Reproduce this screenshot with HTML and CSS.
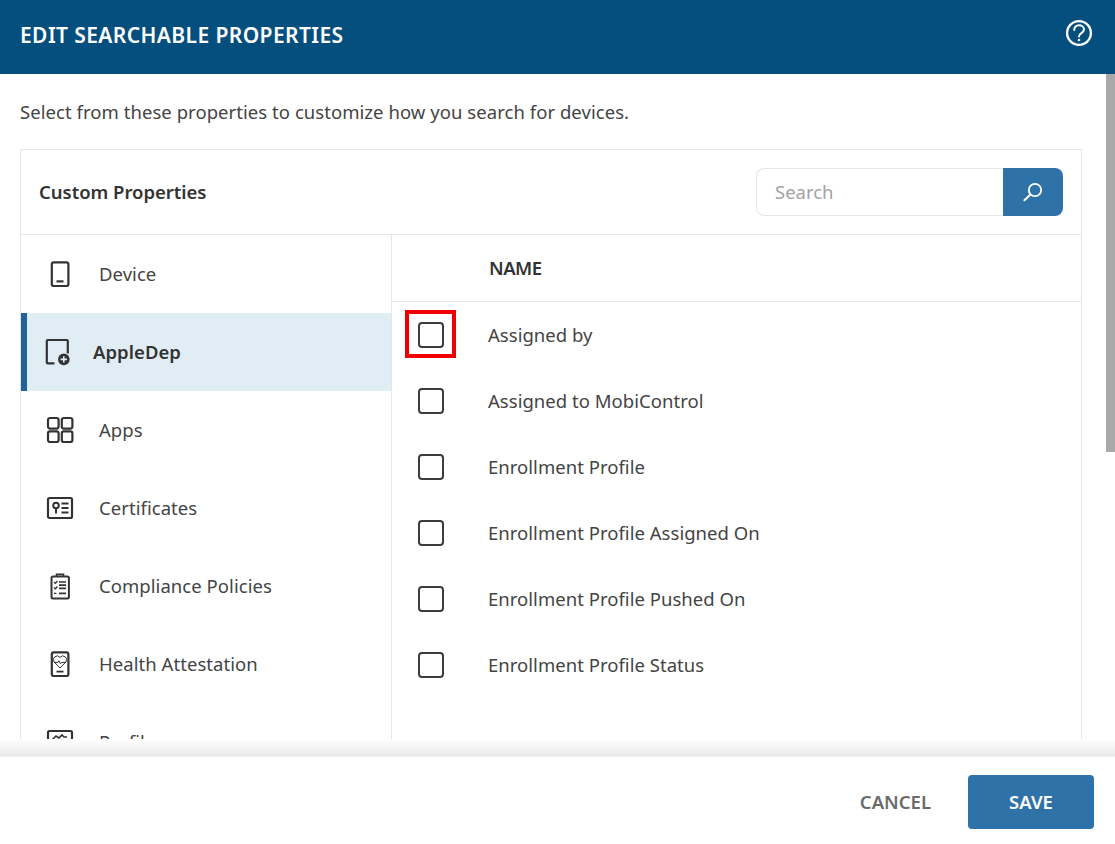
FILE: index.html
```html
<!DOCTYPE html>
<html lang="en">
<head>
    <meta charset="UTF-8">
    <meta name="viewport" content="width=device-width, initial-scale=1.0">
    <title>Edit Searchable Properties</title>
    <link rel="stylesheet" href="styles.css">
</head>
<body>

<div class="modal">
    <header class="modal-header">
        <h1>EDIT SEARCHABLE PROPERTIES</h1>
        <svg class="help-icon" width="28" height="28" viewBox="0 0 28 28" fill="none" stroke="#fff" stroke-width="2.3">
            <circle cx="14" cy="14" r="11.9"/>
            <path d="M9.2 11c0-3 2.2-4.8 4.9-4.8s4.9 1.8 4.9 4.3c0 3.6-5 3.6-5 6.9" stroke-linecap="round" stroke-width="2"/>
            <circle cx="14" cy="21" r="1.3" fill="#fff" stroke="none"/>
        </svg>
    </header>

    <div class="modal-body">
        <div class="scroll-thumb"></div>
        <p class="intro">Select from these properties to customize how you search for devices.</p>

        <section class="card">
            <div class="card-top">
                <h2>Custom Properties</h2>
                <div class="search">
                    <input type="text" placeholder="Search">
                    <button class="search-btn" type="button" aria-label="Search">
                        <svg width="20" height="20" viewBox="0 0 20 20" fill="none" stroke="#fff" stroke-width="1.8">
                            <circle cx="12" cy="8" r="6.2"/>
                            <path d="M7.4 12.6 1.4 18.2" stroke-linecap="round" stroke-width="2"/>
                        </svg>
                    </button>
                </div>
            </div>

            <div class="card-main">
                <nav class="side">
                    <a class="side-item">
                        <svg class="side-icon" width="28" height="28" viewBox="0 0 28 28" fill="none" stroke="#333" stroke-width="2.2">
                            <rect x="5.8" y="2.4" width="16.6" height="23.6" rx="2"/>
                            <path d="M10.5 21.4h7"/>
                        </svg>
                        <span>Device</span>
                    </a>
                    <a class="side-item active">
                        <svg class="side-icon" width="28" height="28" viewBox="0 0 28 28" fill="none" stroke="#333" stroke-width="2.2">
                            <path d="M11.5 25.4H4.8a1 1 0 0 1-1-1V3a1 1 0 0 1 1-1h19a1 1 0 0 1 1 1v12.5"/>
                            <circle cx="20.8" cy="21.4" r="5.8" fill="#333" stroke="none"/>
                            <path d="M20.8 18.2v6.4M17.6 21.4H24" stroke="#e1edf5" stroke-width="1.6"/>
                        </svg>
                        <span>AppleDep</span>
                    </a>
                    <a class="side-item">
                        <svg class="side-icon" width="28" height="28" viewBox="0 0 28 28" fill="none" stroke="#333" stroke-width="2.2">
                            <rect x="2" y="2" width="10.6" height="10.6" rx="2"/>
                            <rect x="15.8" y="2" width="10.6" height="10.6" rx="2"/>
                            <rect x="2" y="15.4" width="10.6" height="10.6" rx="2"/>
                            <rect x="15.8" y="15.4" width="10.6" height="10.6" rx="2"/>
                        </svg>
                        <span>Apps</span>
                    </a>
                    <a class="side-item">
                        <svg class="side-icon" width="28" height="28" viewBox="0 0 28 28" fill="none" stroke="#333" stroke-width="2.2">
                            <rect x="2" y="4" width="24" height="20" rx="1.5"/>
                            <circle cx="10" cy="11.5" r="2.8" stroke-width="2"/>
                            <path d="M10 14.5v5" stroke-width="2"/>
                            <path d="M15.5 9.5h7M15.5 14h7M15.5 18.5h7" stroke-width="2"/>
                        </svg>
                        <span>Certificates</span>
                    </a>
                    <a class="side-item">
                        <svg class="side-icon" width="28" height="28" viewBox="0 0 28 28" fill="none" stroke="#333" stroke-width="2">
                            <rect x="5.5" y="4.5" width="17.4" height="22" rx="1.5"/>
                            <path d="M10.5 4.5V2.4h7v2.1" stroke-width="1.6"/>
                            <path d="M8 10l1.4 1.4 2-2.4M8 15.5l1.4 1.4 2-2.4M8 21.4h2.4" stroke-width="1.3"/>
                            <path d="M13 10h7M13 13.2h7M13 16.4h7M13 21.4h7" stroke-width="1.7"/>
                        </svg>
                        <span>Compliance Policies</span>
                    </a>
                    <a class="side-item">
                        <svg class="side-icon" width="28" height="28" viewBox="0 0 28 28" fill="none" stroke="#333" stroke-width="2.2">
                            <rect x="5.8" y="2.4" width="16.6" height="23.6" rx="2"/>
                            <path d="M14 18 8.2 12a3.5 3.5 0 0 1 5.8-4.6 3.5 3.5 0 0 1 5.8 4.6Z" stroke-width="1"/>
                            <path d="M8 12.4h4l1-1.6 1.5 3 1-1.4h4.5" stroke-width="1"/>
                            <path d="M10.5 21.6h7" stroke-width="1.8"/>
                        </svg>
                        <span>Health Attestation</span>
                    </a>
                    <a class="side-item">
                        <svg class="side-icon" width="28" height="28" viewBox="0 0 28 28" fill="none" stroke="#333" stroke-width="2.2">
                            <rect x="2" y="3" width="24" height="20" rx="1.5"/>
                            <path d="M6 12l4-4 3 2 3-3 2 2h3" stroke-width="1.6"/>
                        </svg>
                        <span>Profiles</span>
                    </a>
                </nav>

                <div class="table">
                    <div class="table-head">NAME</div>
                    <div class="table-row">
                        <span class="check-wrap marked"><span class="check"></span></span>
                        <span class="row-name">Assigned by</span>
                    </div>
                    <div class="table-row">
                        <span class="check-wrap"><span class="check"></span></span>
                        <span class="row-name">Assigned to MobiControl</span>
                    </div>
                    <div class="table-row">
                        <span class="check-wrap"><span class="check"></span></span>
                        <span class="row-name">Enrollment Profile</span>
                    </div>
                    <div class="table-row">
                        <span class="check-wrap"><span class="check"></span></span>
                        <span class="row-name">Enrollment Profile Assigned On</span>
                    </div>
                    <div class="table-row">
                        <span class="check-wrap"><span class="check"></span></span>
                        <span class="row-name">Enrollment Profile Pushed On</span>
                    </div>
                    <div class="table-row">
                        <span class="check-wrap"><span class="check"></span></span>
                        <span class="row-name">Enrollment Profile Status</span>
                    </div>
                </div>
            </div>
        </section>
    </div>

    <div class="fade"></div>

    <footer class="modal-footer">
        <button class="btn-cancel" type="button">CANCEL</button>
        <button class="btn-save" type="button">SAVE</button>
    </footer>
</div>

</body>
</html>
```

FILE: styles.css
```css
* {
    box-sizing: border-box;
}

body {
    margin: 0;
    font-family: "Noto Sans", Arial, sans-serif;
    background-color: #fff;
    color: #444;
    overflow: hidden;
}

.modal {
    display: flex;
    flex-direction: column;
    height: 844px;
}

.modal-header {
    flex: none;
    height: 74px;
    display: flex;
    align-items: center;
    justify-content: space-between;
    padding: 0 22px 5px 20px;
    background-color: #054f7f;
    color: #fff;
}

.modal-header h1 {
    margin: 0;
    font-size: 21px;
    font-weight: 600;
    letter-spacing: 0.4px;
}

.help-icon {
    margin-bottom: 3px;
}

.modal-body {
    position: relative;
    flex: 1;
    min-height: 0;
    overflow: hidden;
    padding: 0 33px 0 20px;
}

.scroll-thumb {
    position: absolute;
    top: 0;
    right: 0;
    width: 9px;
    height: 378px;
    background-color: #a9a9a9;
}

.intro {
    margin: 0;
    height: 75px;
    line-height: 76px;
    font-size: 18.5px;
    letter-spacing: 0.05px;
}

.card {
    border: 1px solid #e6e6e6;
}

.card-top {
    height: 85px;
    display: flex;
    align-items: center;
    justify-content: space-between;
    padding: 0 18px;
    border-bottom: 1px solid #e6e6e6;
}

.card-top h2 {
    margin: 0 0 2px;
    font-size: 18.5px;
    font-weight: 600;
    color: #333;
    letter-spacing: -0.02px;
}

.search {
    display: flex;
    width: 307px;
    height: 48px;
}

.search input {
    flex: 1;
    min-width: 0;
    padding: 0 18px 2px;
    font-family: inherit;
    font-size: 18.5px;
    border: 1px solid #e6e6e6;
    border-right: none;
    border-radius: 8px 0 0 8px;
    outline: none;
}

.search input::placeholder {
    color: #a3a3a3;
}

.search-btn {
    width: 60px;
    display: flex;
    align-items: center;
    justify-content: center;
    padding: 0;
    border: none;
    border-radius: 0 8px 8px 0;
    background-color: #2f72a8;
}

.card-main {
    display: flex;
    height: 600px;
}

.side {
    flex: none;
    width: 371px;
    border-right: 1px solid #e6e6e6;
}

.side-item {
    height: 78px;
    display: flex;
    align-items: center;
    padding-left: 25px;
    gap: 25px;
    font-size: 18.5px;
    letter-spacing: 0.05px;
}

.side-item span {
    padding-bottom: 2px;
}

.side-item.active {
    padding-left: 16px;
    gap: 22px;
    border-left: 6px solid #21629a;
    background-color: #e1edf5;
    font-weight: 600;
    color: #333;
}

.side-icon {
    flex: none;
}

.table {
    flex: 1;
}

.table-head {
    height: 67px;
    line-height: 66px;
    padding-left: 97px;
    font-size: 18.5px;
    font-weight: 600;
    color: #333;
    letter-spacing: -0.5px;
    border-bottom: 1px solid #e6e6e6;
}

.table-row {
    height: 66px;
    display: flex;
    align-items: center;
    padding-left: 13px;
    gap: 32px;
    font-size: 18.5px;
    letter-spacing: 0.03px;
}

.row-name {
    padding-bottom: 2px;
}

.check-wrap {
    width: 51px;
    height: 48px;
    display: flex;
    align-items: center;
    justify-content: center;
    border: 4px solid transparent;
}

.check-wrap.marked {
    margin-top: -2px;
    padding-top: 2px;
    border-color: #f00000;
}

.check {
    width: 26px;
    height: 26px;
    border: 2px solid #3c3c3c;
    border-radius: 4px;
}

.fade {
    flex: none;
    height: 17px;
    background: linear-gradient(to bottom, #fff, #e9e9e9);
}

.modal-footer {
    flex: none;
    height: 88px;
    display: flex;
    align-items: center;
    justify-content: flex-end;
    gap: 37px;
    padding: 3px 21px 0 0;
    border-top: 1px solid #eee;
}

.btn-cancel,
.btn-save {
    font-family: inherit;
    font-size: 18.5px;
    font-weight: 600;
    border: none;
    background: none;
}

.btn-cancel {
    padding: 0 0 2px;
    color: #6b6b6b;
}

.btn-save {
    width: 126px;
    height: 54px;
    padding: 0 0 2px;
    border-radius: 4px;
    background-color: #2f72a8;
    color: #fff;
}
```
